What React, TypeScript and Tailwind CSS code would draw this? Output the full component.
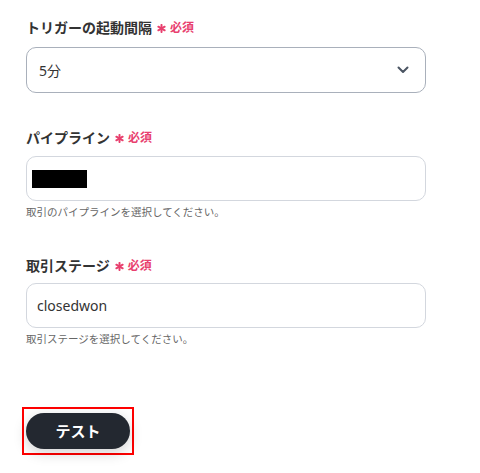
import React from "react";

const font = { fontFamily: '"Noto Sans", "Noto Sans CJK JP", sans-serif' };

function Req() {
  return (
    <span className="ml-[5px] inline-flex items-center gap-[4px] text-[#e8406e]">
      <svg width="9" height="9" viewBox="0 0 10 10" className="mt-[1px]">
        <g stroke="#e8406e" strokeWidth="2.2" strokeLinecap="round">
          <line x1="5" y1="1" x2="5" y2="9" />
          <line x1="1.5" y1="3" x2="8.5" y2="7" />
          <line x1="1.5" y1="7" x2="8.5" y2="3" />
        </g>
      </svg>
      <span className="text-[12px] font-bold leading-5">必須</span>
    </span>
  );
}

function Label({ children }: { children: React.ReactNode }) {
  return (
    <div className="flex h-5 items-center text-[14px] font-bold leading-5 text-[#333333]">
      <span>{children}</span>
      <Req />
    </div>
  );
}

export default function App() {
  return (
    <div className="min-h-[473px] w-[480px] bg-white pl-[26px] pt-[18px]" style={font}>
      {/* Field 1 */}
      <Label>トリガーの起動間隔</Label>
      <div className="mt-[9px] flex h-[46px] w-[400px] items-center justify-between rounded-[10px] border border-[#a9b0bb] pl-[12px] pr-[16px]">
        <span className="text-[14px] text-[#333333]">5分</span>
        <svg width="12" height="8" viewBox="0 0 12 8">
          <path d="M1.5 1.5 L6 6 L10.5 1.5" fill="none" stroke="#4b5563" strokeWidth="2" strokeLinecap="round" strokeLinejoin="round" />
        </svg>
      </div>

      {/* Field 2 */}
      <div className="mt-[35px]">
        <Label>パイプライン</Label>
        <div className="mt-[8px] flex h-[45px] w-[400px] items-center rounded-[10px] border border-[#d3d7de] pl-[5px]">
          <div className="h-[18px] w-[55px] bg-black" />
        </div>
        <div className="mt-[3px] text-[10.5px] leading-[16px] text-[#666666]">
          取引のパイプラインを選択してください。
        </div>
      </div>

      {/* Field 3 */}
      <div className="mt-[36px]">
        <Label>取引ステージ</Label>
        <div className="mt-[7px] flex h-[45px] w-[400px] items-center rounded-[10px] border border-[#d3d7de] pl-[10px]">
          <span className="text-[14px] text-[#333333]">closedwon</span>
        </div>
        <div className="mt-[3px] text-[10.5px] leading-[16px] text-[#666666]">
          取引ステージを選択してください。
        </div>
      </div>

      {/* Button */}
      <div className="ml-[-4px] mt-[60px] inline-flex border-2 border-[#ff0000] px-[2px] py-[4px]">
        <button className="flex h-[36px] w-[104px] items-center justify-center rounded-full bg-[#232830] text-[15px] font-bold text-white shadow-[0_4px_14px_rgba(0,0,0,0.18)]">
          テスト
        </button>
      </div>
    </div>
  );
}
